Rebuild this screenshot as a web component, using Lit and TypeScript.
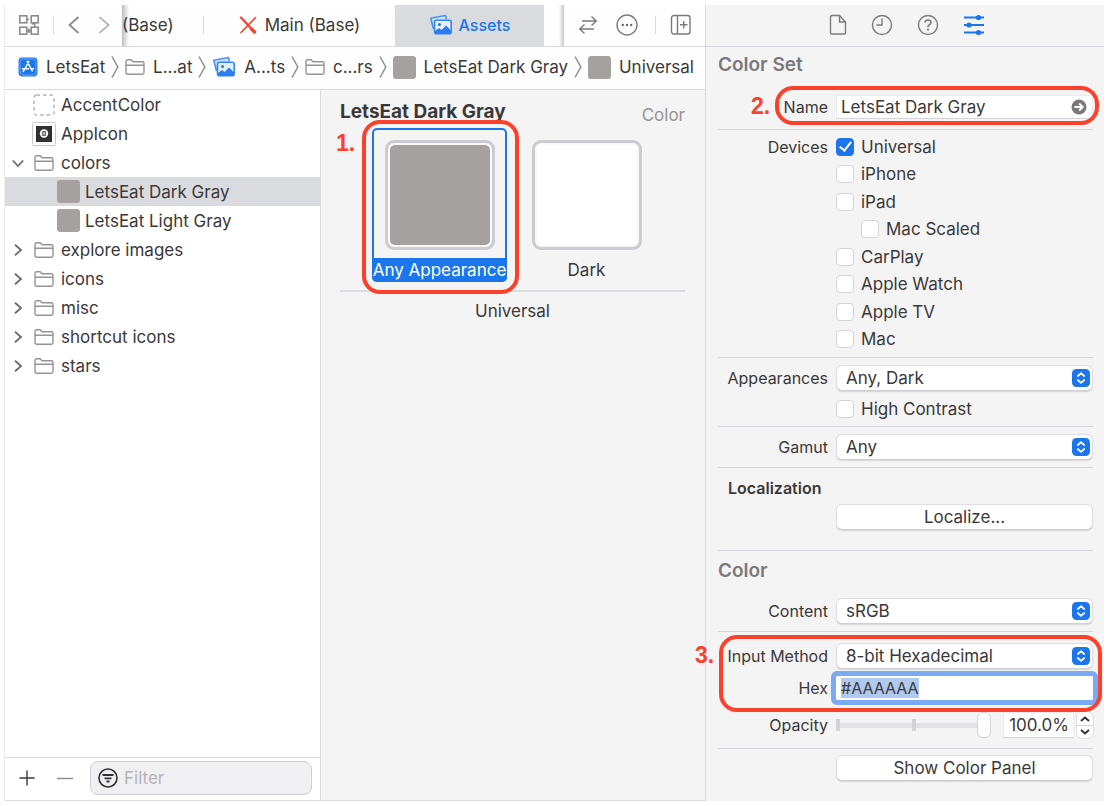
import { LitElement, html, css, svg, nothing } from "lit";
import { customElement, state, query } from "lit/decorators.js";
import { classMap } from "lit/directives/class-map.js";

type IconName =
  | "grid" | "back" | "forward" | "cross" | "images" | "swap" | "more" | "addPanel"
  | "app" | "folder" | "crumb" | "file" | "clock" | "help" | "sliders"
  | "plus" | "minus" | "filter" | "right" | "down" | "go" | "updown" | "accent" | "appIcon"
  | "stepUp" | "stepDown";

const shapes: Record<IconName, { w: number; h: number; body: unknown }> = {
  grid: {
    w: 22, h: 22,
    body: svg`<g fill="none" stroke="#8e8a8b" stroke-width="1.6">
      <rect x="1.8" y="1.8" width="7" height="7"/><rect x="13.2" y="1.8" width="7" height="7"/>
      <rect x="1.8" y="13.2" width="7" height="7"/><rect x="13.2" y="13.2" width="7" height="7"/>
      <path d="M8.8 5.3h2.2M16.7 8.8v4.4M8.8 16.7h4.4M11 14.5v4.4M14 10.5l2.7-2.2"/></g>`,
  },
  back: { w: 12, h: 18, body: svg`<path d="M10.5 1 1.5 9l9 8" fill="none" stroke="#8e8a8b" stroke-width="1.8"/>` },
  forward: { w: 12, h: 18, body: svg`<path d="M1.5 1l9 8-9 8" fill="none" stroke="#aeaaab" stroke-width="1.6"/>` },
  cross: {
    w: 18, h: 18,
    body: svg`<g stroke="#f5402c" fill="none" stroke-linecap="round"><path d="M2 1.5 15 15.5" stroke-width="2.2"/>
      <path d="M16.5 1.5 2 16.5" stroke-width="1.6"/><path d="M12.5 13l3 3" stroke-width="3.2"/></g>`,
  },
  images: {
    w: 24, h: 22,
    body: svg`<path d="M4.5 15 1.8 4.3 16.5 1.5 17.3 5" fill="#cfe2fb" stroke="#4a92f2" stroke-width="1.6" stroke-linejoin="round"/>
      <rect x="5.5" y="6.3" width="16.7" height="13.4" rx="2" fill="#e6f0fd" stroke="#3584f0" stroke-width="1.6"/>
      <circle cx="10.5" cy="10.5" r="1.5" fill="#1b76ee"/>
      <path d="M6 19.5v-2.500l4-3 2.500 2 4.500-4.500 5 5v3z" fill="#2a7eef"/>`,
  },
  swap: {
    w: 20, h: 20,
    body: svg`<g fill="none" stroke="#7e7a7b" stroke-width="1.4"><path d="M4 6h14.500M13.500 1.500 18.300 6l-4.800 4.500"/>
      <path d="M16 14H1.700M6.500 9.500 1.700 14l4.800 4.500"/></g>`,
  },
  more: {
    w: 22, h: 22,
    body: svg`<circle cx="11" cy="11" r="10" fill="none" stroke="#7e7a7b" stroke-width="1.4"/>
      <g fill="#6d696a"><circle cx="6.8" cy="11" r="1.2"/><circle cx="11" cy="11" r="1.2"/><circle cx="15.2" cy="11" r="1.2"/></g>`,
  },
  addPanel: {
    w: 22, h: 22,
    body: svg`<g fill="none" stroke="#7e7a7b" stroke-width="1.4"><rect x="1.5" y="1.5" width="18.5" height="18.5" rx="2.5"/>
      <path d="M7.5 1.5v18.500M10 10.800h7.500M13.700 7v7.500"/></g>`,
  },
  app: {
    w: 20, h: 20,
    body: svg`<rect x=".5" y=".5" width="19" height="19" rx="4" fill="#1b76ee"/>
      <rect x="2" y="2" width="16" height="16" rx="3" fill="none" stroke="#7fb2f6" stroke-width=".8"/>
      <path d="M10.800 4.500 6.300 13M9.200 4.500l5 9.500M4.500 11.700h6M13 11.700h2.500M5.300 14.500l.5-.8" fill="none" stroke="#fff" stroke-width="1.5" stroke-linecap="round"/>`,
  },
  folder: {
    w: 20, h: 18,
    body: svg`<path d="M1 14.500V3.500Q1 1.800 2.700 1.800H6.200L8 3.800h9.300Q19 3.800 19 5.500v9q0 1.700-1.700 1.700H2.700Q1 16.200 1 14.500zM1 7.300h18" fill="none" stroke="#979394" stroke-width="1.4" stroke-linejoin="round"/>`,
  },
  crumb: { w: 8, h: 22, body: svg`<path d="M1 .5 6.800 11 1 21.500" fill="none" stroke="#918d8e" stroke-width="1.5"/>` },
  file: {
    w: 18, h: 22,
    body: svg`<path d="M1.500 3q0-1.500 1.500-1.500h7.500l6 6.500v10.500q0 1.500-1.500 1.500H3q-1.500 0-1.500-1.500zM10.500 1.500V8h6" fill="none" stroke="#7e7a7b" stroke-width="1.4"/>`,
  },
  clock: {
    w: 22, h: 22,
    body: svg`<g fill="none" stroke="#7e7a7b" stroke-width="1.4"><circle cx="11" cy="11" r="9.5"/><path d="M11 4.500V11H5.500"/></g>`,
  },
  help: {
    w: 22, h: 22,
    body: svg`<g fill="none" stroke="#7e7a7b" stroke-width="1.4"><circle cx="11" cy="11" r="9.5"/>
      <path d="M8 8.500Q8.200 6 11 6t3 2.300q0 1.500-1.500 2.400-1.500.8-1.500 2.500" stroke-width="1.6"/></g><circle cx="11" cy="15.6" r="1.1" fill="#7e7a7b"/>`,
  },
  sliders: {
    w: 22, h: 22,
    body: svg`<path d="M1 3.500h20M1 11h20M1 18.500h20" stroke="#1b76ee" stroke-width="2"/>
      <g fill="#1b76ee"><circle cx="15.5" cy="3.5" r="2.6"/><circle cx="6" cy="11" r="2.6"/><circle cx="15.5" cy="18.5" r="2.6"/></g>`,
  },
  plus: { w: 16, h: 16, body: svg`<path d="M8 .5v15M.5 8h15" stroke="#3b3839" stroke-width="1.4"/>` },
  minus: { w: 16, h: 16, body: svg`<path d="M0 8.500h16" stroke="#8e8a8b" stroke-width="1.4"/>` },
  filter: {
    w: 20, h: 20,
    body: svg`<g fill="none" stroke="#333031" stroke-width="1.6"><circle cx="10" cy="10" r="9"/><path d="M4.500 7h11M6.500 10.300h7M8.500 13.500h3" stroke-width="1.8"/></g>`,
  },
  right: { w: 12, h: 12, body: svg`<path d="M3 .8 9 6l-6 5.200" fill="none" stroke="#6d696a" stroke-width="1.8"/>` },
  down: { w: 12, h: 12, body: svg`<path d="M.8 3.500 6 9l5.200-5.500" fill="none" stroke="#6d696a" stroke-width="1.8"/>` },
  go: {
    w: 16, h: 16,
    body: svg`<circle cx="8" cy="8" r="7.5" fill="#7b7778"/><path d="M3.500 8h8M8.200 4.500 11.800 8l-3.600 3.500" fill="none" stroke="#fff" stroke-width="1.8"/>`,
  },
  updown: {
    w: 18, h: 18,
    body: svg`<rect width="18" height="18" rx="4.5" fill="#1b76ee"/><path d="M5.800 7 9 4.200 12.200 7M5.800 11 9 13.800l3.200-2.800" fill="none" stroke="#fff" stroke-width="1.7" stroke-linecap="round" stroke-linejoin="round"/>`,
  },
  accent: { w: 22, h: 22, body: svg`<rect x="1" y="1" width="20" height="20" rx="2.5" fill="none" stroke="#8e8a8b" stroke-dasharray="3.5 3"/>` },
  appIcon: {
    w: 24, h: 24,
    body: svg`<rect x=".5" y=".5" width="23" height="23" rx="1" fill="#fff" stroke="#c9c8cc"/><rect x="4" y="4" width="16" height="16" fill="#333031"/>
      <circle cx="12" cy="11.5" r="4.2" fill="#fff"/><path d="M10.300 9.500h3.200v4h-3.200zM12 9.500v4" fill="none" stroke="#555" stroke-width=".9"/>`,
  },
  stepUp: { w: 12, h: 8, body: svg`<path d="M2 6l4-3.500L10 6" fill="none" stroke="#333031" stroke-width="1.9"/>` },
  stepDown: { w: 12, h: 8, body: svg`<path d="M2 2l4 3.500L10 2" fill="none" stroke="#333031" stroke-width="1.9"/>` },
};

const icon = (name: IconName) => {
  const s = shapes[name];
  return html`<svg class="icon" width=${s.w} height=${s.h} viewBox="0 0 ${s.w} ${s.h}" aria-hidden="true">${s.body}</svg>`;
};

const base = css`
  *, *::before, *::after { box-sizing: border-box; }
  .icon { display: block; flex: none; }
  button, input, select { font: inherit; color: inherit; margin: 0; }
  .plain { border: 0; padding: 0; background: none; display: flex; align-items: center; }
  .swatch { flex: none; width: 23px; height: 23px; border-radius: 3px; background: #a5a1a0; }
  .mark { position: absolute; border: 4px solid #fb402c; border-radius: 18px; pointer-events: none; }
  .step { position: absolute; color: #fb402c; font: bold 23px/24px "Liberation Sans", Arial, sans-serif; }
`;

@customElement("editor-tabs")
class EditorTabs extends LitElement {
  static styles = [base, css`
    :host { display: flex; height: 42px; border-bottom: 1px solid #d9d9de; background: #fefefe; }
    .nav { display: flex; align-items: center; padding: 0 0 2px 13px; width: 117px; flex: none; }
    .rule { width: 1px; height: 18px; background: #d9d9de; flex: none; }
    .nav .rule { margin: 0 14px 0 13px; }
    .nav .plain + .plain { margin-left: 18px; }
    .strip {
      display: flex; flex: 1; min-width: 0; overflow: hidden;
      background: linear-gradient(90deg, #bdbcc0, #fefefe00 7px) left / 7px 100% no-repeat;
    }
    .tab { display: flex; align-items: center; justify-content: center; gap: 8px; padding-bottom: 2px; white-space: nowrap; flex: none; }
    .first { width: 81px; justify-content: flex-start; }
    .main { width: 191px; }
    .active { width: 149px; background: #dadbdf; color: #1b76ee; font-size: 16px; font-weight: 500; gap: 6px; }
    .tools {
      display: flex; align-items: center; flex: none; width: 146px; padding: 0 0 2px 19px;
      background: linear-gradient(90deg, #fefefe00, #c6c5c9) left / 5px 100% no-repeat;
    }
    .tools .rule { margin: 0 14px 0 17px; }
    .tools .more { margin-left: 18px; }
  `];
  render() {
    return html`
      <div class="nav">
        <button class="plain" aria-label="Related items">${icon("grid")}</button>
        <span class="rule"></span>
        <button class="plain" aria-label="Back">${icon("back")}</button>
        <button class="plain" aria-label="Forward">${icon("forward")}</button>
      </div>
      <div class="strip">
        <button class="plain tab first">(Base)</button>
        <span class="tab"><span class="rule"></span></span>
        <button class="plain tab main">${icon("cross")} Main (Base)</button>
        <button class="plain tab active">${icon("images")} Assets</button>
      </div>
      <div class="tools">
        <button class="plain" aria-label="Compare">${icon("swap")}</button>
        <button class="plain more" aria-label="More">${icon("more")}</button>
        <span class="rule"></span>
        <button class="plain" aria-label="Add editor">${icon("addPanel")}</button>
      </div>`;
  }
}

@customElement("path-bar")
class PathBar extends LitElement {
  static styles = [base, css`
    :host { display: block; border-bottom: 1px solid #d9d9de; background: #fefefe; }
    .bar { display: flex; align-items: center; justify-content: space-between; height: 42px; padding: 0 11px 2px 13px; white-space: nowrap; }
    .crumb { display: flex; align-items: center; gap: 8px; color: inherit; text-decoration: none; }
    .swatch + .text { margin-left: -1px; }
  `];
  crumbs: [IconName | "swatch", string][] = [
    ["app", "LetsEat"], ["folder", "L...at"], ["images", "A...ts"], ["folder", "c...rs"],
    ["swatch", "LetsEat Dark Gray"], ["swatch", "Universal"],
  ];
  render() {
    return html`<nav class="bar">${this.crumbs.map(([pic, label], i) => html`
      ${i ? icon("crumb") : nothing}
      <a class="crumb" href="#">${pic === "swatch" ? html`<span class="swatch"></span>` : icon(pic)}${label}</a>`)}</nav>`;
  }
}

interface Item { label: string; pic: IconName | "swatch"; child?: boolean; open?: boolean; selected?: boolean; }

@customElement("asset-list")
class AssetList extends LitElement {
  static styles = [base, css`
    :host { display: flex; flex-direction: column; border-right: 1px solid #d9d9de; background: #fff; }
    .list { list-style: none; margin: 0; padding: 0; flex: 1; }
    .row { display: flex; align-items: center; height: 29px; padding-left: 7px; }
    .selected { background: #dadbdf; }
    .twist { width: 12px; flex: none; }
    .pic { width: 24px; margin: 0 5px 0 8px; display: flex; justify-content: center; flex: none; }
    .child .pic { margin-left: 32px; }
    .foot { display: flex; align-items: center; border-top: 1px solid #d9d9de; height: 43px; padding: 0 8px 2px 14px; }
    .foot .plain + .plain { margin-left: 22px; }
    .filter {
      flex: 1; min-width: 0; margin-left: 17px; height: 34px; display: flex; align-items: center; gap: 6px; padding: 0 7px;
      border: 1px solid #cfcfd5; border-radius: 8px; background: #f0f0f2;
    }
    .filter input { flex: 1; min-width: 0; border: 0; padding: 0; background: none; outline: 0; }
    .filter input::placeholder { color: #b5b4b8; opacity: 1; }
  `];
  items: Item[] = [
    { label: "AccentColor", pic: "accent" },
    { label: "AppIcon", pic: "appIcon" },
    { label: "colors", pic: "folder", open: true },
    { label: "LetsEat Dark Gray", pic: "swatch", child: true, selected: true },
    { label: "LetsEat Light Gray", pic: "swatch", child: true },
    { label: "explore images", pic: "folder", open: false },
    { label: "icons", pic: "folder", open: false },
    { label: "misc", pic: "folder", open: false },
    { label: "shortcut icons", pic: "folder", open: false },
    { label: "stars", pic: "folder", open: false },
  ];
  render() {
    return html`
      <ul class="list">${this.items.map((it) => html`
        <li class=${classMap({ row: true, child: !!it.child, selected: !!it.selected })}>
          <span class="twist">${it.open === undefined ? nothing : icon(it.open ? "down" : "right")}</span>
          <span class="pic">${it.pic === "swatch" ? html`<span class="swatch"></span>` : icon(it.pic)}</span>
          ${it.label}
        </li>`)}
      </ul>
      <div class="foot">
        <button class="plain" aria-label="Add">${icon("plus")}</button>
        <button class="plain" aria-label="Remove">${icon("minus")}</button>
        <label class="filter">${icon("filter")}<input type="text" placeholder="Filter" aria-label="Filter" /></label>
      </div>`;
  }
}

@customElement("color-canvas")
class ColorCanvas extends LitElement {
  static styles = [base, css`
    :host { display: block; background: #f4f4f4; padding: 11px 20px 0 19px; }
    .head { display: flex; justify-content: space-between; align-items: flex-end; height: 27px; line-height: 24px; }
    .title { margin: 0 0 4px; font-size: 19px; font-weight: 700; white-space: nowrap; }
    .kind { color: #969293; margin-bottom: 1px; }
    .wells { display: flex; gap: 12px; padding: 0 0 8px 32px; }
    .well { position: relative; width: 135px; height: 154px; display: flex; flex-direction: column; align-items: center; padding-top: 12px; }
    .frame { width: 110px; height: 110px; border: 3px solid #cbcbd0; border-radius: 9px; padding: 2px; background: #f8f8f8; }
    .fill { height: 100%; border-radius: 5px; background: #fff; }
    .gray { background: #a5a1a0; }
    .name { line-height: 24px; margin-top: 8px; align-self: stretch; text-align: center; white-space: nowrap; }
    .on { box-shadow: inset 0 0 0 2px #1b76ee; border-radius: 5px; }
    .on .name { background: #1b76ee; color: #fff; border-radius: 0 0 5px 5px; }
    .on .mark { inset: -8px -12px -12px -10px; }
    .on .step { left: -36px; top: 3px; }
    .group { border-top: 2px solid #dbdbe0; padding-top: 7px; text-align: center; line-height: 24px; }
  `];
  render() {
    return html`
      <div class="head"><h2 class="title">LetsEat Dark Gray</h2><span class="kind">Color</span></div>
      <div class="wells">
        <div class="well on">
          <div class="frame"><div class="fill gray"></div></div>
          <div class="name">Any Appearance</div>
          <span class="mark"></span><span class="step">1.</span>
        </div>
        <div class="well">
          <div class="frame"><div class="fill"></div></div>
          <div class="name">Dark</div>
        </div>
      </div>
      <div class="group">Universal</div>`;
  }
}

@customElement("attributes-inspector")
class AttributesInspector extends LitElement {
  static styles = [base, css`
    :host { display: block; background: #f4f4f4; border-left: 1px solid #d9d9de; }
    .tabs { display: flex; align-items: center; justify-content: center; gap: 24px; height: 42px; border-bottom: 1px solid #d9d9de; padding: 0 0 2px 3px; }
    .body { padding: 0 11px 0 12px; }
    .heading { margin: 0; font-size: 19px; line-height: 36px; font-weight: 600; color: #7c797b; }
    .section { border-bottom: 1px solid #d5d5da; padding: 7px 0; }
    .section.name { padding: 12px 0 10px; position: relative; }
    .section.devices { padding: 3px 0 4px; }
    .section.looks { padding-bottom: 3px; }
    .section.local { padding: 8px 0 20px; }
    .section.color { padding: 2px 0 7px; }
    .section.values { padding: 11px 0 10px; position: relative; }
    .section.last { border: 0; padding: 6px 0 20px; }
    .field { display: grid; grid-template-columns: 110px minmax(0, 1fr); column-gap: 8px; align-items: center; }
    .label { font-size: 16px; text-align: right; white-space: nowrap; }
    .field .only { grid-column: 2; }
    .checks { display: grid; grid-template-columns: minmax(0, 1fr); grid-auto-rows: 1fr; height: 220px; }
    .devices .field { align-items: start; }
    .devices .label { line-height: 28px; }
    .check { display: flex; align-items: center; gap: 7px; }
    .check.inner { padding-left: 25px; }
    .check.alone { height: 28px; margin-top: 4px; }
    .box {
      appearance: none; flex: none; width: 18px; height: 18px; display: grid; place-items: center;
      border: 1px solid #d3d3d8; border-radius: 4px; background: #fff;
    }
    .box:checked { border-color: #1b76ee; background: #1b76ee; }
    .box:checked::before { content: ""; width: 7px; height: 12px; margin-top: -3px; border: solid #fff; border-width: 0 2px 2px 0; transform: rotate(38deg); }
    .popup { position: relative; display: block; }
    .popup select {
      appearance: none; display: block; width: 100%; height: 26px; padding: 0 28px 0 9px; border: 1px solid #dedee3;
      border-bottom-color: #cfcfd4; border-radius: 6px; background: #fff; box-shadow: 0 1px 1px #d6d6da;
    }
    .popup .icon { position: absolute; right: 3px; top: 4px; pointer-events: none; }
    .push {
      display: block; width: 100%; height: 26px; padding: 0; border: 1px solid #dedee3; border-bottom-color: #cfcfd4;
      border-radius: 6px; background: #fff; box-shadow: 0 1px 1px #d6d6da;
    }
    .text { display: flex; align-items: center; height: 24px; background: #fff; border: 1px solid #ececef; border-bottom-color: #d3d3d8; padding: 0 5px 0 4px; }
    .text input { flex: 1; min-width: 0; border: 0; padding: 0; background: none; outline: 0; height: 22px; }
    .text.hex { border-color: #fff; outline: 5px solid #7aaaf3; border-radius: 1px; margin: 7px 0 0; font-size: 16px; }
    .hex input::selection { background: #b0c9ee; color: #3b3839; }
    .local .title { margin: 0 0 4px; font-size: 16px; line-height: 24px; font-weight: 600; padding-left: 10px; }
    .color .field { margin-top: 9px; }
    .values .label.low { padding-top: 7px; }
    .opacity { margin-top: 12px; }
    .range { display: flex; align-items: center; height: 26px; }
    .range .slide {
      appearance: none; flex: 1; min-width: 0; height: 26px; margin-right: 12px;
      background:
        linear-gradient(#d3d3d7, #d3d3d7) 0 50% / 4px 12px no-repeat,
        linear-gradient(#d3d3d7, #d3d3d7) 50% 50% / 4px 12px no-repeat,
        linear-gradient(#e2e2e5, #e2e2e5) 0 50% / 100% 5px no-repeat;
    }
    .range .slide::-webkit-slider-thumb { appearance: none; width: 14px; height: 26px; border-radius: 6px; border: 1px solid #d3d3d8; background: #fff; }
    .range .amount { width: 71px; height: 26px; border: 1px solid #ececef; border-bottom-color: #d3d3d8; background: #fff; padding: 0 4px 0 0; text-align: right; }
    .stepper { width: 18px; height: 28px; margin: 0 -1px 0 2px; border: 1px solid #dedee3; border-radius: 6px; background: #fff; display: grid; grid-template-rows: 1fr 1fr; }
    .stepper .plain { justify-content: center; }
    .stepper .plain + .plain { border-top: 1px solid #d3d3d8; }
    .name .mark { inset: 3px -6px 4px 57px; }
    .name .step { left: 33px; top: 11px; }
    .values .mark { inset: 3px -9px 36px 1px; }
    .values .step { left: -23px; top: 11px; }
  `];

  @state() devices: [string, boolean, boolean][] = [
    ["Universal", true, false], ["iPhone", false, false], ["iPad", false, false], ["Mac Scaled", false, true],
    ["CarPlay", false, false], ["Apple Watch", false, false], ["Apple TV", false, false], ["Mac", false, false],
  ];
  @query("#hex") hex!: HTMLInputElement;

  firstUpdated() {
    this.hex.focus();
    this.hex.select();
  }

  popup(id: string, label: string, value: string) {
    return html`<div class="field"><label class="label" for=${id}>${label}</label>
      <span class="popup"><select id=${id}><option>${value}</option></select>${icon("updown")}</span></div>`;
  }

  render() {
    return html`
      <div class="tabs">
        <button class="plain" aria-label="File inspector">${icon("file")}</button>
        <button class="plain" aria-label="History inspector">${icon("clock")}</button>
        <button class="plain" aria-label="Help inspector">${icon("help")}</button>
        <button class="plain" aria-label="Attributes inspector">${icon("sliders")}</button>
      </div>
      <div class="body">
        <h2 class="heading">Color Set</h2>
        <div class="section name">
          <div class="field"><label class="label" for="name">Name</label>
            <span class="text"><input id="name" type="text" .value=${"LetsEat Dark Gray"} />
              <button class="plain" aria-label="Show in Finder">${icon("go")}</button></span></div>
          <span class="mark"></span><span class="step">2.</span>
        </div>
        <div class="section devices">
          <div class="field"><span class="label" id="devices">Devices</span>
            <div class="checks" role="group" aria-labelledby="devices">
              ${this.devices.map(([label, on, inner]) => html`
                <label class=${classMap({ check: true, inner })}><input class="box" type="checkbox" .checked=${on} />${label}</label>`)}
            </div></div>
        </div>
        <div class="section looks">
          ${this.popup("appearances", "Appearances", "Any, Dark")}
          <div class="field"><label class="check alone only"><input class="box" type="checkbox" />High Contrast</label></div>
        </div>
        <div class="section">${this.popup("gamut", "Gamut", "Any")}</div>
        <div class="section local">
          <h3 class="title">Localization</h3>
          <div class="field"><button class="push only">Localize...</button></div>
        </div>
        <div class="section color">
          <h2 class="heading">Color</h2>
          ${this.popup("content", "Content", "sRGB")}
        </div>
        <div class="section values">
          ${this.popup("method", "Input Method", "8-bit Hexadecimal")}
          <div class="field"><label class="label low" for="hex">Hex</label>
            <span class="text hex"><input id="hex" type="text" .value=${"#AAAAAA"} /></span></div>
          <div class="field opacity"><label class="label" for="opacity">Opacity</label>
            <div class="range">
              <input class="slide" id="opacity" type="range" min="0" max="100" .value=${"100"} />
              <input class="amount" type="text" aria-label="Opacity value" .value=${"100.0%"} />
              <span class="stepper">
                <button class="plain" aria-label="Increase">${icon("stepUp")}</button>
                <button class="plain" aria-label="Decrease">${icon("stepDown")}</button>
              </span>
            </div></div>
          <span class="mark"></span><span class="step">3.</span>
        </div>
        <div class="section last"><div class="field"><button class="push only">Show Color Panel</button></div></div>
      </div>`;
  }
}

@customElement("app-root")
class AppRoot extends LitElement {
  static styles = [base, css`
    :host {
      display: flex; box-sizing: border-box; min-height: 100vh; padding: 5px; background: #fff;
      font: 17px/20px Inter, "Liberation Sans", sans-serif; color: #3b3839;
    }
    .window {
      flex: 1; min-width: 0; display: grid; grid-template-columns: minmax(0, 1fr) 399px;
      box-shadow: -1px 0 0 #ececef;
    }
    .editor { display: flex; flex-direction: column; border-bottom: 1px solid #d9d9de; }
    .panes { flex: 1; display: grid; grid-template-columns: 316px minmax(0, 1fr); }
  `];
  render() {
    return html`<div class="window">
      <main class="editor">
        <editor-tabs></editor-tabs>
        <path-bar></path-bar>
        <div class="panes"><asset-list></asset-list><color-canvas></color-canvas></div>
      </main>
      <attributes-inspector></attributes-inspector>
    </div>`;
  }
}
